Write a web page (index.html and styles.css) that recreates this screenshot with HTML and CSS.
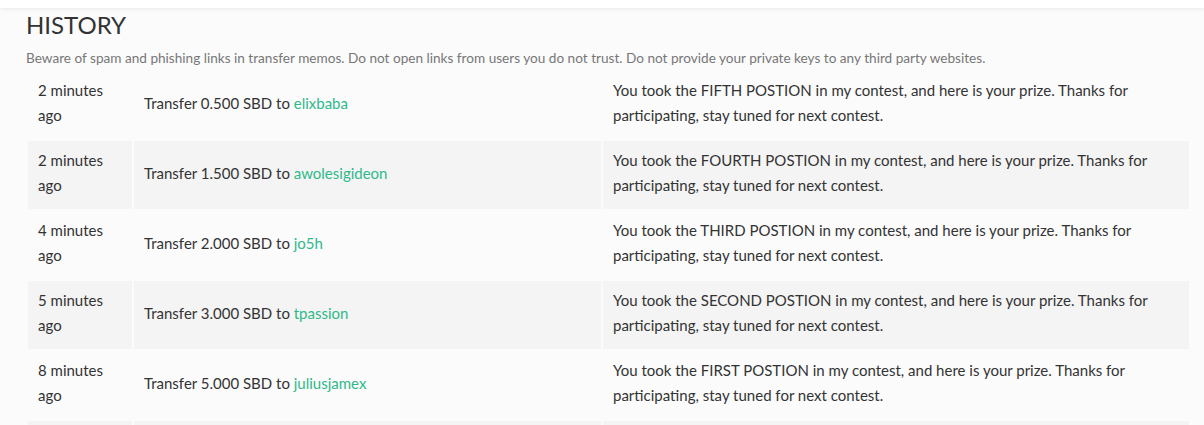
FILE: index.html
```html
<!DOCTYPE html>
<html lang="en">
<head>
<meta charset="utf-8">
<title>History</title>
<link rel="stylesheet" href="styles.css">
</head>
<body>
<div class="topbar"></div>
<main class="history">
  <h2 class="history__title">HISTORY</h2>
  <p class="history__warning">Beware of spam and phishing links in transfer memos. Do not open links from users you do not trust. Do not provide your private keys to any third party websites.</p>
  <table class="transfers">
    <colgroup>
      <col class="transfers__col-time">
      <col class="transfers__col-op">
      <col class="transfers__col-memo">
    </colgroup>
    <tbody>
      <tr>
        <td class="transfers__time">2 minutes ago</td>
        <td class="transfers__op">Transfer 0.500 SBD to <a href="#" class="transfers__user">elixbaba</a></td>
        <td class="transfers__memo">You took the FIFTH POSTION in my contest, and here is your prize. Thanks for participating, stay tuned for next contest.</td>
      </tr>
      <tr>
        <td class="transfers__time">2 minutes ago</td>
        <td class="transfers__op">Transfer 1.500 SBD to <a href="#" class="transfers__user">awolesigideon</a></td>
        <td class="transfers__memo">You took the FOURTH POSTION in my contest, and here is your prize. Thanks for participating, stay tuned for next contest.</td>
      </tr>
      <tr>
        <td class="transfers__time">4 minutes ago</td>
        <td class="transfers__op">Transfer 2.000 SBD to <a href="#" class="transfers__user">jo5h</a></td>
        <td class="transfers__memo">You took the THIRD POSTION in my contest, and here is your prize. Thanks for participating, stay tuned for next contest.</td>
      </tr>
      <tr>
        <td class="transfers__time">5 minutes ago</td>
        <td class="transfers__op">Transfer 3.000 SBD to <a href="#" class="transfers__user">tpassion</a></td>
        <td class="transfers__memo">You took the SECOND POSTION in my contest, and here is your prize. Thanks for participating, stay tuned for next contest.</td>
      </tr>
      <tr>
        <td class="transfers__time">8 minutes ago</td>
        <td class="transfers__op">Transfer 5.000 SBD to <a href="#" class="transfers__user">juliusjamex</a></td>
        <td class="transfers__memo">You took the FIRST POSTION in my contest, and here is your prize. Thanks for participating, stay tuned for next contest.</td>
      </tr>
      <tr class="transfers__more">
        <td></td>
        <td></td>
        <td></td>
      </tr>
    </tbody>
  </table>
</main>
</body>
</html>
```
FILE: styles.css
```css
html, body {
  margin: 0;
  padding: 0;
}
body {
  background: #fbfbfb;
  font-family: "Lato", "Liberation Sans", sans-serif;
  color: #333;
  overflow: hidden;
}
.topbar {
  height: 8px;
  background: #fff;
  box-shadow: 0 1px 4px rgba(0, 0, 0, 0.08);
}
.history {
  padding: 0 11px 0 26px;
}
.history__title {
  margin: 0;
  padding-top: 3px;
  font-size: 24px;
  font-weight: 400;
  line-height: 28px;
  color: #333;
}
.history__warning {
  margin: 10px 0 2px;
  font-size: 13.6px;
  line-height: 18px;
  color: #777;
}
.transfers {
  width: calc(100% - 2px);
  margin-left: 0;
  border-collapse: separate;
  border-spacing: 2px;
  table-layout: fixed;
  font-size: 15px;
  line-height: 25px;
}
.transfers__col-time { width: 104px; }
.transfers__col-op { width: 467px; }
.transfers td {
  padding: 7px 10px 11px;
  height: 50px;
  vertical-align: middle;
}
.transfers tr:nth-child(even) td {
  background: #f4f4f4;
}
.transfers__memo {
  padding-left: 11px;
}
.transfers__user {
  color: #2fb98a;
  text-decoration: none;
}
```
